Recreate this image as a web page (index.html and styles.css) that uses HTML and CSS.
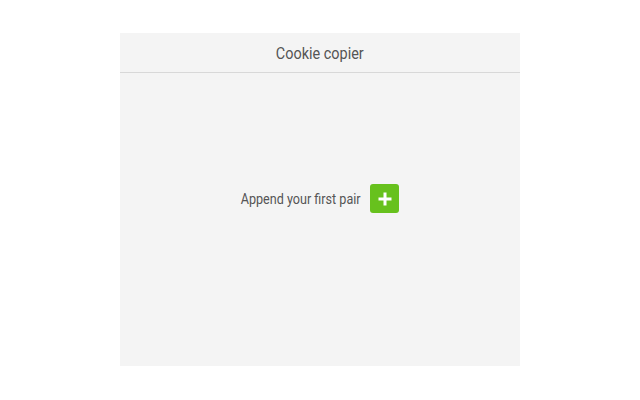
FILE: index.html
```html
<!DOCTYPE html>
<html>
<head>
<meta charset="utf-8">
<link rel="stylesheet" href="styles.css">
</head>
<body>
<div class="panel">
  <div class="header"><span class="title">Cookie copier</span></div>
  <div class="content">
    <span class="label">Append your first pair</span>
    <button class="add" type="button" aria-label="Add">
      <svg width="14" height="14" viewBox="0 0 14 14"><path d="M7 0.5v13M0.5 7h13" stroke="#fff" stroke-width="3" fill="none"/></svg>
    </button>
  </div>
</div>
</body>
</html>
```
FILE: styles.css
```css
html, body { margin: 0; padding: 0; background: #fff; }
body { padding-top: 33px; font-family: Roboto, "Liberation Sans", sans-serif; }
.panel {
  width: 400px;
  height: 333px;
  margin: 0 auto;
  background: #f4f4f4;
  display: flex;
  flex-direction: column;
}
.header {
  height: 39px;
  border-bottom: 1px solid #d8d8d8;
  display: flex;
  align-items: center;
  justify-content: center;
}
.title {
  display: inline-block;
  font-size: 17px;
  color: #555;
  transform: scaleX(0.85);
}
.content {
  flex: 1;
  display: flex;
  align-items: center;
  justify-content: center;
  gap: 9px;
  padding-bottom: 42px;
}
.label {
  display: inline-block;
  font-size: 14px;
  color: #555;
  transform: scaleX(0.9);
  margin: 0 -6.5px;
}
.add {
  width: 29px; height: 29px;
  border: none; border-radius: 3px;
  background: #67c11d;
  display: flex; align-items: center; justify-content: center;
  padding: 0; cursor: pointer;
}
.add svg { display: block; }
```
